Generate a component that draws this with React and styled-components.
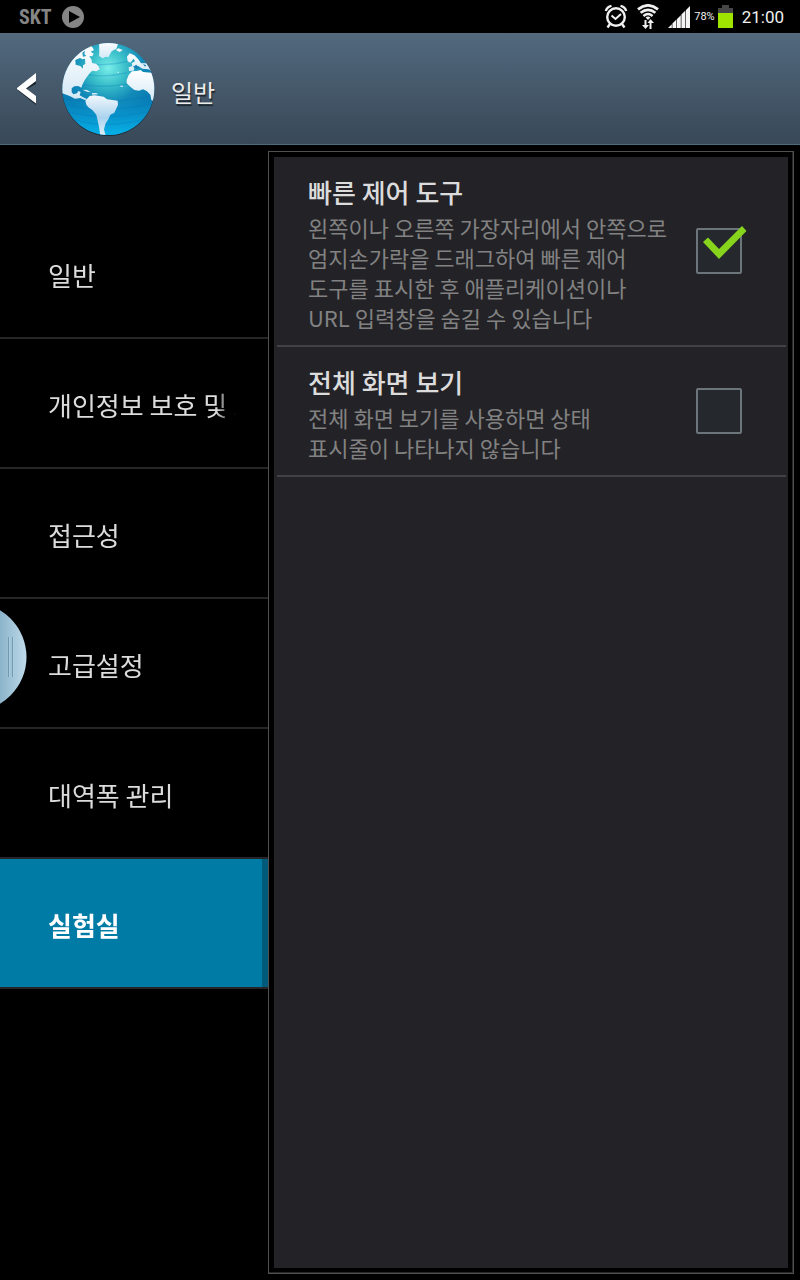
import { useState } from "react";
import styled, { createGlobalStyle, css } from "styled-components";

const menuItems = [
  { id: "general", label: "일반" },
  { id: "privacy", label: "개인정보 보호 및 보안" },
  { id: "accessibility", label: "접근성" },
  { id: "advanced", label: "고급설정" },
  { id: "bandwidth", label: "대역폭 관리" },
  { id: "labs", label: "실험실" },
];

const labSettings = [
  {
    id: "quick-controls",
    title: "빠른 제어 도구",
    description:
      "왼쪽이나 오른쪽 가장자리에서 안쪽으로 엄지손가락을 드래그하여 빠른 제어 도구를 표시한 후 애플리케이션이나 URL 입력창을 숨길 수 있습니다",
    enabled: true,
  },
  {
    id: "fullscreen",
    title: "전체 화면 보기",
    description: "전체 화면 보기를 사용하면 상태 표시줄이 나타나지 않습니다",
    enabled: false,
  },
];

const PlayIcon = () => (
  <svg width="24" height="24" viewBox="0 0 24 24" aria-hidden="true">
    <circle cx="12" cy="12" r="11" fill="#858585" />
    <path d="M8 6 L19 12 L8 18 Z" fill="#000" />
  </svg>
);

const AlarmIcon = () => (
  <svg width="24" height="26" viewBox="0 0 24 26" fill="none" stroke="#f0f0f0" aria-hidden="true">
    <circle cx="12" cy="13" r="8.8" strokeWidth="2.4" />
    <path d="M7.5 11.5 L11.5 15 L17 10" strokeWidth="2" />
    <path d="M1.8 7 Q3 3 7.5 1.9 M22.2 7 Q21 3 16.5 1.9" strokeWidth="2.4" />
    <path d="M6 20 L3.5 23.5 M18 20 L20.5 23.5" strokeWidth="2.4" />
  </svg>
);

const WifiIcon = () => (
  <svg width="22" height="26" viewBox="0 0 22 26" fill="none" stroke="#f0f0f0" aria-hidden="true">
    <path d="M1 5.4 Q11 -2.6 21 5.4" strokeWidth="2.8" />
    <path d="M3.6 8.8 Q11 2.8 18.4 8.8" strokeWidth="2.6" />
    <path d="M6.4 12 Q11 8.2 15.6 12" strokeWidth="2.4" />
    <path d="M8.5 16 V22 M13.5 25 V18" strokeWidth="2" />
    <path d="M5 21 H12 L8.5 25 Z M10.5 19 H17 L13.5 15 Z" fill="#f0f0f0" stroke="none" />
    <path d="M8.6 13.4 Q11 11.6 13.4 13.4 L11 16 Z" fill="#f0f0f0" stroke="none" />
  </svg>
);

const SignalIcon = () => (
  <svg width="23" height="24" viewBox="0 0 23 24" aria-hidden="true">
    <path
      d="M0 23 L3.8 19.2 V23 Z M4.4 18.6 L8.2 14.8 V23 H4.4 Z M8.8 14.2 L12.8 10.2 V23 H8.8 Z M13.4 9.6 L17.4 5.6 V23 H13.4 Z M18 5 L22 1 V23 H18 Z"
      fill="#f4f4f4"
    />
  </svg>
);

const BatteryIcon = () => (
  <svg width="15" height="24" viewBox="0 0 15 24" aria-hidden="true">
    <path d="M4 0 H11 V3 H15 V8 H0 V3 H4 Z" fill="#474747" />
    <rect y="8" width="15" height="15" fill="#9fe400" />
  </svg>
);

const GlobeIcon = () => (
  <svg width="96" height="96" viewBox="15 15 288 288" aria-hidden="true">
    <defs>
      <radialGradient id="ocean" gradientUnits="userSpaceOnUse" cx="160" cy="96" r="150">
        <stop offset="0" stopColor="#7aeeea" />
        <stop offset="0.35" stopColor="#3abfca" />
        <stop offset="0.7" stopColor="#1189b8" />
        <stop offset="1" stopColor="#087cb4" />
      </radialGradient>
      <linearGradient id="deep" x1="0" y1="0" x2="0" y2="1">
        <stop offset="0.6" stopColor="#0aa5e0" stopOpacity="0" />
        <stop offset="1" stopColor="#06b4ea" />
      </linearGradient>
      <linearGradient id="land" x1="0" y1="0" x2="0" y2="1">
        <stop offset="0" stopColor="#ffffff" />
        <stop offset="1" stopColor="#d3e8f5" />
      </linearGradient>
      <linearGradient id="south" x1="0" y1="0" x2="0" y2="1">
        <stop offset="0" stopColor="#f2f8fc" />
        <stop offset="0.55" stopColor="#aad2ee" />
        <stop offset="1" stopColor="#e3f2fb" />
      </linearGradient>
      <clipPath id="sphere">
        <circle cx="160" cy="159" r="138" />
      </clipPath>
    </defs>
    <circle cx="160" cy="162" r="138" fill="#16222c" opacity="0.75" />
    <g clipPath="url(#sphere)">
      <rect x="20" y="20" width="280" height="280" fill="url(#ocean)" />
      <rect x="20" y="20" width="280" height="280" fill="url(#deep)" />
      <g fill="none" stroke="#0774ba" strokeWidth="4" opacity="0.25">
        <path d="M110 84 Q160 90 216 76" />
        <path d="M100 116 Q160 126 216 110" />
        <path d="M86 146 Q150 158 240 140" />
        <path d="M22 186 Q150 214 296 176" />
        <path d="M24 204 Q150 236 292 202" />
        <path d="M34 226 Q150 258 284 226" />
        <path d="M52 250 Q150 280 268 250" />
      </g>
      <g fill="url(#land)">
        <path
          fillRule="evenodd"
          d="M15 20 H98 L112 34 L117 42 L107 47 L116 53 L112 61 L103 60 L110 72 L111 81 L123 83 L130 90 L134 100 L124 106 L112 104 L104 112 L95 124 L88 134 L82 146 L79 155 L70 150 L58 151 L50 157 L50 168 L55 175 L66 172 L70 165 L77 168 L74 178 L84 184 L97 190 L90 192 L76 186 L60 188 L44 180 L28 174 L15 170 Z M61 72 L75 66 L82 70 L90 68 L91 84 L84 88 L84 98 L76 90 L62 86 Z M82 50 L90 44 L88 54 L94 60 L84 62 Z"
        />
        <path d="M132 15 H192 L184 38 L170 46 L160 64 L152 62 L143 67 L132 60 L133 50 Z" />
        <path d="M182 42 L190 37 L203 42 L194 49 Z" />
        <path d="M216 62 L224 52 L238 58 L250 70 L258 82 L274 82 L296 110 L280 100 L262 98 L250 90 L238 94 L236 104 L222 105 L221 94 L232 90 L230 82 L240 76 L236 68 L226 80 L218 76 Z" />
        <path d="M215 132 L221 117 L231 106 L245 105 L257 102 L264 108 L290 110 L304 150 L302 198 L289 192 L286 176 L276 166 L264 160 L252 164 L238 162 L226 152 L215 142 Z" />
        <path d="M82 161 L96 162 L108 169 L96 167 Z M110 171 L124 171 L130 175 L112 176 Z M184 108 L192 107 L192 110 Z M196 149 H204 V152 H196 Z" />
      </g>
      <path
        d="M91 194 L104 180 L118 178 L132 180 L146 182 L156 190 L188 194 L189 206 L182 222 L178 230 L166 236 L160 250 L152 262 L147 280 L152 300 L136 300 L132 272 L128 254 L124 236 L112 222 L100 214 L94 206 Z"
        fill="url(#south)"
      />
      <path d="M234 92 L244 86 L252 96 L246 100 Z M264 84 L274 88 L270 92 Z" fill="#157fb6" />
    </g>
  </svg>
);

const DrawerHandle = () => (
  <svg width="28" height="100" viewBox="0 0 28 100" aria-hidden="true">
    <defs>
      <linearGradient id="handle" x1="0" x2="27" y1="0" y2="0" gradientUnits="userSpaceOnUse">
        <stop offset="0" stopColor="#8bb3ca" />
        <stop offset="1" stopColor="#c0dceb" />
      </linearGradient>
    </defs>
    <circle cx="-28" cy="50" r="54.5" fill="url(#handle)" />
    <path d="M8.5 30 V70 M12.5 30 V70" stroke="#6f9ab2" />
    <path d="M9.5 30 V70 M13.5 30 V70" stroke="#b4d3e3" opacity="0.6" />
  </svg>
);

export default function App() {
  const [selected, setSelected] = useState("labs");
  const [values, setValues] = useState(
    Object.fromEntries(labSettings.map(({ id, enabled }) => [id, enabled]))
  );

  const toggle = (id) => setValues({ ...values, [id]: !values[id] });

  return (
    <>
      <GlobalStyle />
      <Screen>
        <StatusBar>
          <Carrier>SKT</Carrier>
          <PlayIcon />
          <StatusIcons>
            <AlarmIcon />
            <WifiIcon />
            <SignalIcon />
            <BatteryLevel>78%</BatteryLevel>
            <BatteryIcon />
            <Clock>21:00</Clock>
          </StatusIcons>
        </StatusBar>

        <Header>
          <BackButton type="button" aria-label="뒤로">
            <svg width="20" height="32" viewBox="0 0 20 32" aria-hidden="true">
              <path d="M19 3 V11 L8 17 L19 25 V32 L1 17.5 Z" fill="#1b252e" />
              <path d="M19 0 V8 L9 15.5 L19 23 V30.5 L0 16 V15 Z" fill="#fff" />
            </svg>
          </BackButton>
          <GlobeIcon />
          <PageTitle>일반</PageTitle>
        </Header>

        <Body>
          <Menu>
            {menuItems.map(({ id, label }) => (
              <MenuItem
                key={id}
                type="button"
                $active={id === selected}
                onClick={() => setSelected(id)}
              >
                <MenuLabel>{label}</MenuLabel>
              </MenuItem>
            ))}
          </Menu>

          <Panel>
            <PanelContent>
              {labSettings.map(({ id, title, description }) => (
                <Setting key={id}>
                  <SettingText htmlFor={id}>
                    <SettingTitle>{title}</SettingTitle>
                    <SettingDescription>{description}</SettingDescription>
                  </SettingText>
                  <CheckWrapper>
                    <Checkbox
                      type="checkbox"
                      id={id}
                      checked={values[id]}
                      onChange={() => toggle(id)}
                    />
                    {values[id] && (
                      <CheckMark viewBox="0 -2 52 48" aria-hidden="true">
                        <path d="M7 14 L12 9.5 L23 21 L46 -2 L50.5 3 L23 31 Z" fill="#86d41c" />
                      </CheckMark>
                    )}
                  </CheckWrapper>
                </Setting>
              ))}
            </PanelContent>
          </Panel>
        </Body>

        <Handle type="button" aria-label="메뉴 열기">
          <DrawerHandle />
        </Handle>
      </Screen>
    </>
  );
}

const GlobalStyle = createGlobalStyle`
  * {
    box-sizing: border-box;
  }

  body {
    margin: 0;
    background-color: #000;
    font-family: "Noto Sans CJK KR", sans-serif;
  }

  button {
    border: 0;
    padding: 0;
    background: none;
    color: inherit;
    font: inherit;
    cursor: pointer;
  }
`;

const Screen = styled.div`
  position: relative;
  display: flex;
  flex-direction: column;
  min-height: 100vh;
  background-color: #000;
  color: #dcdcdc;
`;

const StatusBar = styled.div`
  display: flex;
  align-items: center;
  gap: 9px;
  height: 33px;
  padding: 0 16px 0 19px;
  font-family: Roboto, sans-serif;
`;

const Carrier = styled.span`
  color: #858585;
  font-family: "Liberation Sans Narrow", "Roboto Condensed", Roboto, sans-serif;
  font-size: 20px;
  font-weight: 700;
`;

const StatusIcons = styled.div`
  display: flex;
  align-items: center;
  gap: 9px;
  margin-left: auto;
`;

const BatteryLevel = styled.span`
  margin: 0 -6px;
  color: #f0f0f0;
  font-size: 11px;
`;

const Clock = styled.time`
  color: #f0f0f0;
  font-size: 17px;
`;

const Header = styled.header`
  display: flex;
  align-items: center;
  height: 112px;
  padding-left: 17px;
  background: linear-gradient(#52697e, #384857);
  border-bottom: 1px solid #4c6a7c;
`;

const BackButton = styled.button`
  display: flex;
  margin-right: 23px;
`;

const PageTitle = styled.h1`
  margin: 0 0 0 15px;
  padding-top: 6px;
  color: #ececec;
  font-size: 24px;
  font-weight: 400;
  text-shadow: 1px 2px 1px #1b252e;
`;

const Body = styled.main`
  display: flex;
  flex: 1;
`;

const Menu = styled.nav`
  flex: 0 0 268px;
  min-width: 0;
  padding-top: 64px;
`;

const MenuItem = styled.button`
  display: flex;
  align-items: center;
  width: 100%;
  height: 130px;
  padding: 2px 32px 0 48px;
  border-bottom: 2px solid #262626;
  font-size: 26px;
  text-align: left;

  ${(props) =>
    props.$active &&
    css`
      background-color: #007ba6;
      box-shadow: inset -6px 0 #005a7a;
      color: #fff;
      font-weight: 700;
    `};
`;

const MenuLabel = styled.span`
  flex: 1;
  min-width: 0;
  overflow: hidden;
  white-space: nowrap;
  mask-image: linear-gradient(to left, transparent, #000 20px);
`;

const Panel = styled.section`
  display: flex;
  flex: 1;
  min-width: 0;
  margin: 6px 6px 6px 0;
  padding: 5px;
  border: 1px solid #505050;
  box-shadow: inset -1px -1px #262626;
`;

const PanelContent = styled.div`
  flex: 1;
  padding: 0 2px 0 3px;
  background-color: #232227;
`;

const Setting = styled.div`
  display: flex;
  align-items: center;
  gap: 26px;
  padding: 0 44px 0 31px;
  border-bottom: 2px solid #424146;
`;

const SettingText = styled.label`
  flex: 1;
  padding: 15px 0 13px;
  word-break: keep-all;
`;

const SettingTitle = styled.span`
  display: block;
  color: #dcdcdc;
  font-size: 26px;
  font-weight: 500;
  line-height: 40px;
`;

const SettingDescription = styled.span`
  display: block;
  color: #828282;
  font-size: 22px;
  font-weight: 400;
  line-height: 30px;
`;

const CheckWrapper = styled.div`
  position: relative;
  display: flex;
`;

const Checkbox = styled.input`
  width: 46px;
  height: 46px;
  margin: 0;
  appearance: none;
  background-color: #25282d;
  border: 2px solid #6b757b;
  border-radius: 2px;
`;

const CheckMark = styled.svg`
  position: absolute;
  top: -2px;
  left: 0;
  width: 52px;
  height: 48px;
  pointer-events: none;
`;

const Handle = styled.button`
  position: absolute;
  top: 607px;
  left: 0;
  display: flex;
`;
